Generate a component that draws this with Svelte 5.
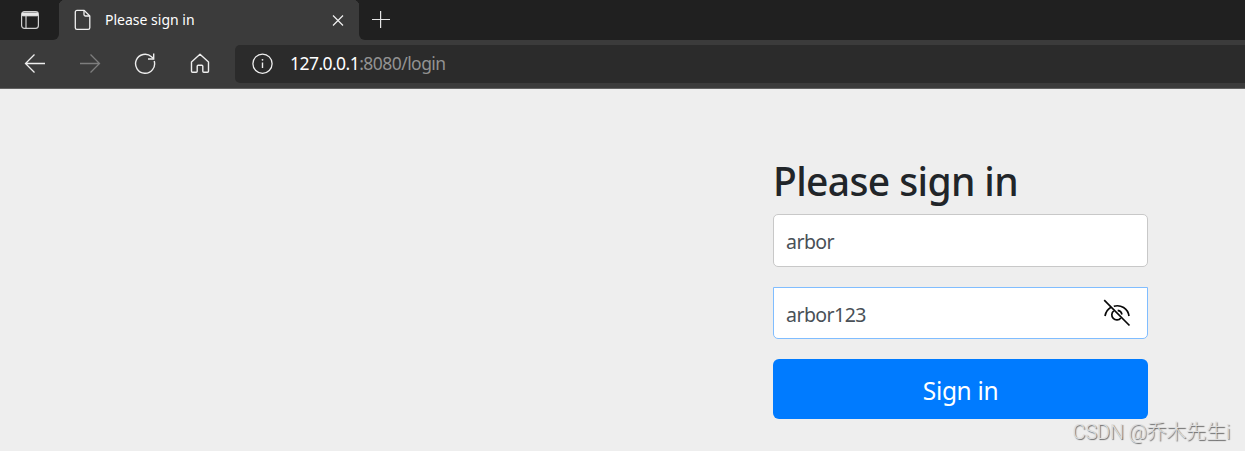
<script>
  let username = $state('arbor');
  let password = $state('arbor123');
</script>

<div class="window">
  <header class="tabs">
    <div class="actions">
      <svg width="20" height="20" viewBox="0 0 20 20" fill="none" stroke="#d0d0d0" stroke-width="1.2">
        <rect x="1.6" y="1.6" width="16.8" height="16.8" rx="2.8" />
        <path d="M2.500 3h15v2.800h-15z" fill="#e8e8e8" stroke="#e8e8e8" stroke-width="1" />
        <path d="M6 6v12" />
      </svg>
    </div>
    <div class="tab">
      <svg width="18" height="22" viewBox="0 0 18 22" fill="none" stroke="#f0f0f0" stroke-width="1.3" stroke-linejoin="round">
        <path d="M3 1.400h7.200l5.600 5.600V18.700a1.700 1.700 0 0 1-1.700 1.700H3a1.700 1.700 0 0 1-1.700-1.700V3.100a1.700 1.700 0 0 1 1.700-1.700z" />
        <path d="M10 1.400V5.500a1.500 1.500 0 0 0 1.500 1.500H15.800" />
      </svg>
      <span class="title">Please sign in</span>
      <svg class="close" width="12" height="12" viewBox="0 0 12 12" fill="none" stroke="#f0f0f0" stroke-width="1.2">
        <path d="M1 1.500l10 10M11 1.500l-10 10" />
      </svg>
    </div>
    <div class="rest">
      <svg width="18" height="18" viewBox="0 0 18 18" fill="none" stroke="#e6e6e6" stroke-width="1.2">
        <path d="M0 9.500h18M8.600 1v17" />
      </svg>
    </div>
  </header>

  <nav class="toolbar">
    <div class="buttons">
      <svg width="22" height="22" viewBox="0 0 22 22" fill="none" stroke="#eee" stroke-width="1.3">
        <path d="M10.500 1.500L1.500 10.500l9 9M1.500 10.500H21" />
      </svg>
      <svg width="22" height="22" viewBox="0 0 22 22" fill="none" stroke="#7d7d7d" stroke-width="1.3">
        <path d="M11.500 1.500l9 9-9 9M20.500 10.500H1" />
      </svg>
      <svg width="22" height="22" viewBox="0 .5 22 22" fill="none" stroke="#eee" stroke-width="1.4">
        <path d="M20.200 8.500A9.500 9.500 0 1 1 17.500 4.200L19.600 6.300" />
        <path d="M19.700 1v5.500H14" />
      </svg>
      <svg width="22" height="22" viewBox="0 0 22 22" fill="none" stroke="#eee" stroke-width="1.4" stroke-linejoin="round">
        <path d="M11 1.300L2.500 8.900V18.200a1 1 0 0 0 1 1H7.200a1 1 0 0 0 1-1V13.300a1 1 0 0 1 1-1h3.600a1 1 0 0 1 1 1v4.900a1 1 0 0 0 1 1h3.700a1 1 0 0 0 1-1V8.900z" />
      </svg>
    </div>
    <div class="address">
      <svg width="22" height="22" viewBox="0 0 22 22" fill="none" stroke="#eee" stroke-width="1.3">
        <circle cx="11.500" cy="10.700" r="9.600" />
        <path d="M11.500 9.500v5.500" stroke-width="1.4" />
        <circle cx="11.500" cy="6.800" r=".9" fill="#eee" stroke="none" />
      </svg>
      <span class="url"><b>127.0.0.1</b>:8080/login</span>
    </div>
  </nav>

  <main>
    <form onsubmit={(e) => e.preventDefault()}>
      <h2>Please sign in</h2>
      <input class="field" type="text" aria-label="Username" bind:value={username} />
      <div class="field password">
        <input type="text" aria-label="Password" bind:value={password} />
        <svg width="28" height="28" viewBox="0 0 28 28" fill="none" stroke="#080808" stroke-width="1.7">
          <path d="M1.200 1.200L26.500 26.500" />
          <path d="M2 17c.8-4 2.900-7 6-8.700M10.800 7.300C17.800 5.300 24.800 9.500 26 17" />
          <path d="M10.800 11.900A5 5 0 1 0 17.800 18.900" />
          <path d="M14.700 11.300a5 5 0 0 1 4.200 4.200" />
        </svg>
      </div>
      <button type="submit"><span>Sign in</span></button>
    </form>
    <div class="watermark">CSDN @乔木先生i</div>
  </main>
</div>

<style>
  :global(body) {
    margin: 0;
    overflow: hidden;
  }
  .window {
    display: flex;
    flex-direction: column;
    width: 1245px;
    height: 451px;
    background: #eee;
    font-family: 'Noto Sans', 'Open Sans', sans-serif;
  }
  svg {
    display: block;
    flex: none;
  }
  .tabs {
    display: flex;
    height: 40px;
    background: #3b3b3b;
  }
  .actions,
  .rest {
    box-sizing: border-box;
    display: flex;
    background: #202020;
  }
  .actions {
    width: 59px;
    padding: 10px 0 0 20px;
    border-bottom-right-radius: 6px;
  }
  .tab {
    box-sizing: border-box;
    display: flex;
    align-items: center;
    width: 300px;
    padding: 0 15px;
    background: radial-gradient(circle at 6px 6px, #3b3b3b 6px, #202020 6.5px) 0 0 / 6px 6px no-repeat,
      radial-gradient(circle at 0 6px, #3b3b3b 6px, #202020 6.5px) 100% 0 / 6px 6px no-repeat, #3b3b3b;
  }
  .title {
    flex: 1;
    margin-left: 13px;
    color: #fff;
    font-size: 14px;
    line-height: 20px;
    white-space: nowrap;
  }
  .rest {
    flex: 1;
    padding: 10px 0 0 13px;
    border-bottom-left-radius: 6px;
  }
  .toolbar {
    box-sizing: border-box;
    display: flex;
    height: 49px;
    padding-top: 5px;
    background: #3b3b3b;
    border-bottom: 1px solid #626262;
  }
  .buttons {
    box-sizing: border-box;
    display: flex;
    gap: 33px;
    width: 235px;
    padding: 8px 0 0 24px;
  }
  .address {
    display: flex;
    flex: 1;
    align-items: center;
    height: 38px;
    padding-left: 16px;
    border-radius: 5px 0 0 5px;
    background: #2b2b2b;
  }
  .url {
    margin: -2px 0 0 17px;
    color: #929292;
    font-size: 17.5px;
    line-height: 24px;
    letter-spacing: -0.55px;
  }
  .url b {
    color: #fff;
    font-weight: 400;
  }
  main {
    position: relative;
    flex: 1;
  }
  form {
    display: flex;
    flex-direction: column;
    width: 376px;
    margin: 69px 0 0 772px;
  }
  h2 {
    margin: -1px 0 9px 1px;
    color: #212529;
    font-size: 39px;
    font-weight: 500;
    line-height: 48px;
    letter-spacing: -0.62px;
    white-space: nowrap;
  }
  .field,
  button {
    margin-left: 1px;
  }
  .field {
    box-sizing: border-box;
    width: 375px;
    height: 53px;
    padding: 2px 12px 0;
    border: 1px solid #c8c8c8;
    border-radius: 5px;
    outline: none;
    background: #fff;
    color: #495057;
    font: 400 19.5px 'Noto Sans', 'Open Sans', sans-serif;
    letter-spacing: -0.55px;
  }
  .password {
    display: flex;
    align-items: center;
    justify-content: space-between;
    height: 52px;
    margin-top: 20px;
    padding: 0 16px 0 12px;
    border-color: #80bdff;
    border-radius: 0 0 5px 5px;
  }
  .password input {
    width: 250px;
    padding: 3px 0 0;
    border: 0;
    outline: none;
    background: none;
    color: inherit;
    font: inherit;
    letter-spacing: inherit;
  }
  button {
    width: 375px;
    height: 60px;
    margin-top: 20px;
    padding: 3px 0 0;
    border: 0;
    border-radius: 6px;
    background: #007bff;
    color: #fff;
    font: 24.5px 'Noto Sans', 'Open Sans', sans-serif;
    letter-spacing: -0.35px;
  }
  .watermark {
    position: absolute;
    right: 15px;
    bottom: 5px;
    color: #dedede;
    font: 300 20px/28px Roboto, 'Noto Sans CJK SC', sans-serif;
    letter-spacing: -0.2px;
    text-shadow: 1px 1px 1px #666;
    white-space: nowrap;
  }
</style>
